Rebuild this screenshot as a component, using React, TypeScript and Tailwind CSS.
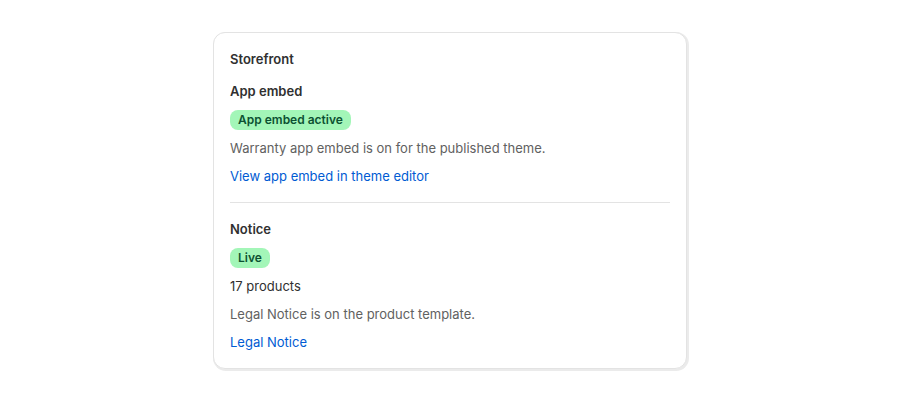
export default function App() {
  return (
    <div
      className="min-h-screen bg-white pt-8 text-[13px] leading-5 text-[#303030]"
      style={{ fontFamily: "Inter, 'Noto Sans', sans-serif" }}
    >
      <div className="mx-auto w-[474px] rounded-xl border border-[#e3e3e3] bg-white p-4 shadow-[1px_1px_0_1px_#ebebeb]">
        <h2 className="font-semibold">Storefront</h2>

        {/* App embed */}
        <div className="mt-3 flex flex-col gap-2">
          <h3 className="font-semibold">App embed</h3>
          <div>
            <span className="inline-flex rounded-lg bg-[#a3f6b8] px-2 py-0.5 text-xs leading-4 font-semibold text-[#0c5132]">
              App embed active
            </span>
          </div>
          <p className="text-[#616161]">Warranty app embed is on for the published theme.</p>
          <a href="#" className="text-[#005bd3]">
            View app embed in theme editor
          </a>
        </div>

        <hr className="my-4 border-[#e3e3e3]" />

        {/* Notice */}
        <div className="flex flex-col gap-2">
          <h3 className="font-semibold">Notice</h3>
          <div>
            <span className="inline-flex rounded-lg bg-[#a3f6b8] px-2 py-0.5 text-xs leading-4 font-semibold text-[#0c5132]">
              Live
            </span>
          </div>
          <p>17 products</p>
          <p className="text-[#616161]">Legal Notice is on the product template.</p>
          <a href="#" className="text-[#005bd3]">
            Legal Notice
          </a>
        </div>
      </div>
    </div>
  );
}
